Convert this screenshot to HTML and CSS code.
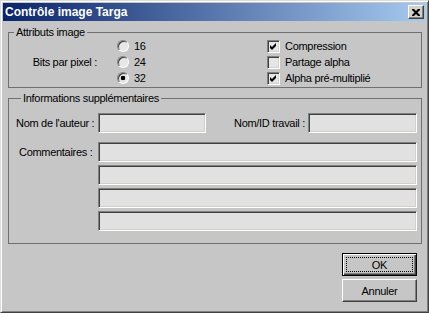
FILE: index.html
```html
<!DOCTYPE html>
<html lang="fr">
<head>
  <meta charset="UTF-8">
  <title>Contrôle image Targa</title>
  <link rel="stylesheet" href="styles.css">
</head>
<body>
<div class="window">
  <div class="titlebar">
    <span class="title">Contrôle image Targa</span>
    <button class="close-btn" aria-label="Fermer">
      <svg width="8" height="7" viewBox="0 0 8 7"><path d="M0 0h2l2 2 2-2h2v1l-2.5 2.5L8 6v1H6L4 5 2 7H0V6l2.5-2.5L0 1z" fill="#000"/></svg>
    </button>
  </div>
  <div class="content">
    <fieldset class="group group-attrs">
      <legend>Attributs image</legend>
      <div class="attrs">
        <div class="bits-label">Bits par pixel :</div>
        <div class="radios">
          <label class="opt"><span class="radio"></span>16</label>
          <label class="opt"><span class="radio"></span>24</label>
          <label class="opt"><span class="radio checked"></span>32</label>
        </div>
        <div class="checks">
          <label class="opt"><span class="check"><svg width="11" height="11" viewBox="0 0 11 11"><polygon points="2,4 4,6 8,2 8,5 4,9 2,7" fill="#000"/></svg></span>Compression</label>
          <label class="opt"><span class="check"></span>Partage alpha</label>
          <label class="opt"><span class="check"><svg width="11" height="11" viewBox="0 0 11 11"><polygon points="2,4 4,6 8,2 8,5 4,9 2,7" fill="#000"/></svg></span>Alpha pré-multiplié</label>
        </div>
      </div>
    </fieldset>

    <fieldset class="group group-info">
      <legend>Informations supplémentaires</legend>
      <div class="row-names">
        <span class="field-label">Nom de l'auteur :</span>
        <div class="input short"></div>
        <span class="field-label job">Nom/ID travail :</span>
        <div class="input short wide"></div>
      </div>
      <div class="row-comments">
        <span class="field-label comment">Commentaires :</span>
        <div class="comment-lines">
          <div class="input"></div>
          <div class="input"></div>
          <div class="input"></div>
          <div class="input"></div>
        </div>
      </div>
    </fieldset>

    <div class="actions">
      <button class="btn default"><span class="focus">OK</span></button>
      <button class="btn">Annuler</button>
    </div>
  </div>
</div>
</body>
</html>
```

FILE: styles.css
```css
body {
  margin: 0;
  overflow: hidden;
  font-family: "Liberation Sans", Arial, sans-serif;
  font-size: 11px;
  letter-spacing: -0.3px;
  color: #000;
}
.window {
  width: 429px;
  height: 313px;
  box-sizing: border-box;
  border: 1px solid;
  border-color: #dcdcdc #404040 #404040 #dcdcdc;
  box-shadow: inset 1px 1px #fff, inset -1px -1px #808080;
  background: #c6c6c6;
  padding: 2px;
}
.titlebar {
  height: 18px;
  display: flex;
  align-items: center;
  justify-content: space-between;
  padding: 0 2px 0 2px;
  background: linear-gradient(to right, #0a246a, #a6caf0);
}
.title {
  color: #fff;
  font-weight: bold;
  font-size: 12px;
  letter-spacing: 0;
}
.close-btn {
  width: 16px;
  height: 14px;
  padding: 0;
  display: flex;
  align-items: center;
  justify-content: center;
  background: #d4d0c8;
  border: 1px solid;
  border-color: #fff #404040 #404040 #fff;
  box-shadow: inset -1px -1px #808080;
}
.content {
  padding: 5px 4px 0 5px;
}
.group {
  margin: 0;
  padding: 0;
  min-width: 0;
  border: 1px solid #707070;
}
.group legend {
  margin-left: 5px;
  padding: 0 2px;
  line-height: 13px;
}
.attrs {
  display: flex;
  margin-top: -1px;
  padding-bottom: 1px;
}
.bits-label {
  width: 88px;
  text-align: right;
  align-self: center;
}
.radios {
  width: 150px;
  margin-left: 20px;
}
.opt {
  height: 16px;
  display: flex;
  align-items: center;
}
.radio {
  width: 12px;
  height: 12px;
  box-sizing: border-box;
  border-radius: 50%;
  border: 1px solid;
  border-color: #808080 #fff #fff #808080;
  box-shadow: inset 1px 1px #404040;
  background: #e6e6e6;
  margin-right: 5px;
}
.radio.checked {
  background: radial-gradient(circle at 50% 50%, #000 2px, #e6e6e6 2.6px);
}
.check {
  width: 13px;
  height: 13px;
  box-sizing: border-box;
  border: 1px solid;
  border-color: #808080 #fff #fff #808080;
  box-shadow: inset 1px 1px #404040, inset -1px -1px #d4d0c8;
  background: #e6e6e6;
  margin-right: 5px;
}
.check svg {
  display: block;
}
.group-info {
  margin-top: 4px;
  padding: 0 4px 12px 7px;
}
.row-names {
  display: flex;
  align-items: center;
  margin-top: 8px;
}
.field-label {
  width: 82px;
  flex-shrink: 0;
}
.field-label.job {
  width: auto;
  margin-left: auto;
  margin-right: 3px;
}
.input {
  height: 20px;
  box-sizing: border-box;
  border: 1px solid;
  border-color: #808080 #fff #fff #808080;
  box-shadow: inset 1px 1px #404040, inset -1px -1px #d4d0c8;
  background: #e1e1e1;
}
.input.short {
  width: 108px;
}
.input.wide {
  width: 109px;
}
.row-comments {
  display: flex;
  margin-top: 9px;
}
.field-label.comment {
  box-sizing: border-box;
  padding-left: 3px;
  line-height: 20px;
}
.comment-lines {
  flex: 1;
  display: flex;
  flex-direction: column;
  gap: 3px;
}
.actions {
  display: flex;
  flex-direction: column;
  align-items: flex-end;
  gap: 3px;
  margin-top: 9px;
  padding-right: 5px;
}
.btn {
  width: 75px;
  height: 23px;
  padding: 0;
  font: inherit;
  letter-spacing: -0.3px;
  color: #000;
  background: #c6c6c6;
  border: 1px solid;
  border-color: #fff #404040 #404040 #fff;
  box-shadow: inset -1px -1px #808080;
}
.btn.default {
  display: flex;
  border-color: #000;
  box-shadow: inset 1px 1px #fff, inset -1px -1px #404040, inset -2px -2px #808080;
}
.btn .focus {
  flex: 1;
  margin: 3px;
  border: 1px dotted #000;
  display: flex;
  align-items: center;
  justify-content: center;
}
```
